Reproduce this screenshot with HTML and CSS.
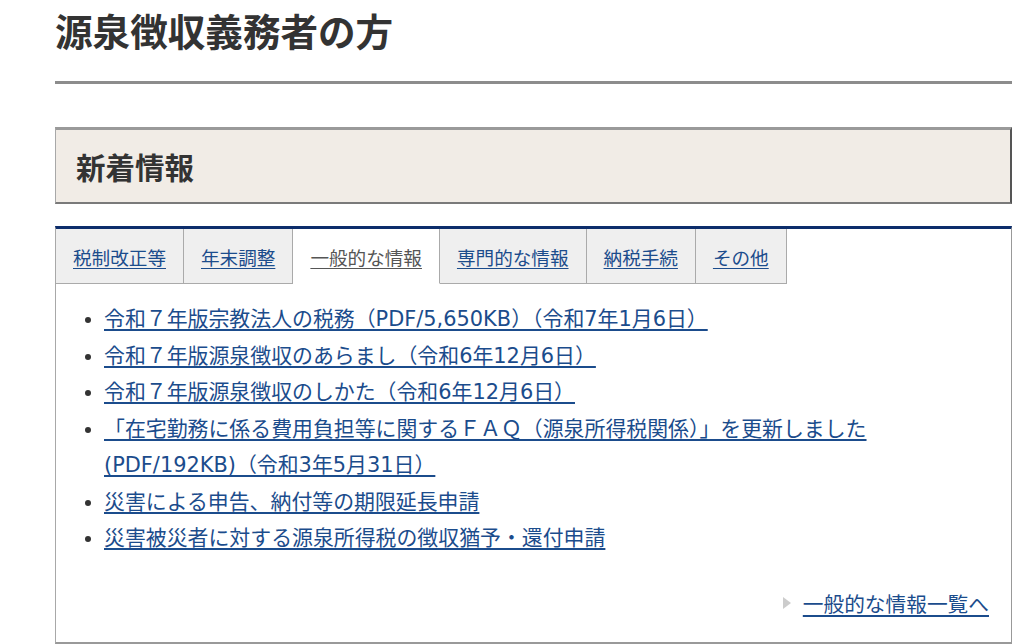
FILE: index.html
```html
<!DOCTYPE html>
<html lang="ja">
<head>
<meta charset="utf-8">
<title>源泉徴収義務者の方</title>
<link rel="stylesheet" href="styles.css">
</head>
<body>
<div class="page">
  <h1 class="title">源泉徴収義務者の方</h1>
  <div class="news-head">新着情報</div>
  <div class="panel">
    <ul class="tabs">
      <li class="tab"><a href="#">税制改正等</a></li>
      <li class="tab"><a href="#">年末調整</a></li>
      <li class="tab active"><a href="#">一般的な情報</a></li>
      <li class="tab"><a href="#">専門的な情報</a></li>
      <li class="tab"><a href="#">納税手続</a></li>
      <li class="tab"><a href="#">その他</a></li>
    </ul>
    <ul class="items">
      <li><a href="#">令和７年版宗教法人の税務（PDF/5,650KB）（令和7年1月6日）</a></li>
      <li><a href="#">令和７年版源泉徴収のあらまし（令和6年12月6日）</a></li>
      <li><a href="#">令和７年版源泉徴収のしかた（令和6年12月6日）</a></li>
      <li><a href="#">「在宅勤務に係る費用負担等に関するＦＡＱ（源泉所得税関係）」を更新しました(PDF/192KB)（令和3年5月31日）</a></li>
      <li><a href="#">災害による申告、納付等の期限延長申請</a></li>
      <li><a href="#">災害被災者に対する源泉所得税の徴収猶予・還付申請</a></li>
    </ul>
    <div class="more"><span class="arrow"></span><a href="#">一般的な情報一覧へ</a></div>
  </div>
</div>
</body>
</html>
```

FILE: styles.css
```css
html, body {
  margin: 0;
  padding: 0;
  background: #ffffff;
}
body {
  font-family: "Noto Sans CJK JP", "Noto Sans", sans-serif;
  color: #333333;
}
.page {
  margin-left: 55px;
  width: 957px;
}
.title {
  margin: 0;
  padding: 6px 0 27px;
  font-size: 37.6px;
  line-height: 48px;
  font-weight: 700;
  color: #333333;
  border-bottom: 3px solid #8c8c8c;
}
.news-head {
  margin-top: 43px;
  box-sizing: border-box;
  height: 77px;
  background: #f1ece6;
  border-top: 3px solid #9a9a9a;
  border-left: 1px solid #a8a8a8;
  border-right: 2px solid #555555;
  border-bottom: 2px solid #7a7a7a;
  padding-left: 20px;
  font-size: 29.5px;
  font-weight: 700;
  line-height: 72px;
  color: #333333;
}
.panel {
  margin-top: 22px;
  box-sizing: border-box;
  height: 418px;
  border-top: 3px solid #0c2d6b;
  border-left: 1px solid #a8a8a8;
  border-right: 1px solid #999999;
  border-bottom: 2px solid #999999;
}
.tabs {
  list-style: none;
  margin: 0;
  padding: 0;
  display: flex;
  height: 55px;
}
.tab {
  box-sizing: border-box;
  height: 55px;
  padding: 0 17px;
  background: #efefef;
  border-right: 1px solid #aaaaaa;
  border-bottom: 1px solid #aaaaaa;
  display: flex;
  align-items: center;
  font-size: 18.6px;
}
.tab a {
  color: #1b4c8c;
  text-decoration: underline;
  text-underline-offset: 3px;
}
.tab.active {
  background: #ffffff;
  border-bottom-color: transparent;
}
.tab.active a {
  color: #555555;
}
.items {
  margin: 17px 0 0;
  padding: 0 40px 0 48px;
  font-family: "DejaVu Sans", "Noto Sans CJK JP", sans-serif;
  font-size: 20.9px;
  line-height: 36.5px;
}
.items li {
  color: #333333;
}
.items a {
  color: #1b4c8c;
  text-decoration: underline;
  text-underline-offset: 3px;
}
.more {
  margin-top: 28px;
  display: flex;
  justify-content: flex-end;
  align-items: center;
  padding-right: 22px;
  font-size: 20.7px;
  line-height: 36px;
}
.more a {
  color: #1b4c8c;
  text-decoration: underline;
  text-underline-offset: 3px;
}
.arrow {
  width: 0;
  height: 0;
  border-top: 6px solid transparent;
  border-bottom: 6px solid transparent;
  border-left: 8px solid #cccccc;
  margin-right: 12px;
}
```
